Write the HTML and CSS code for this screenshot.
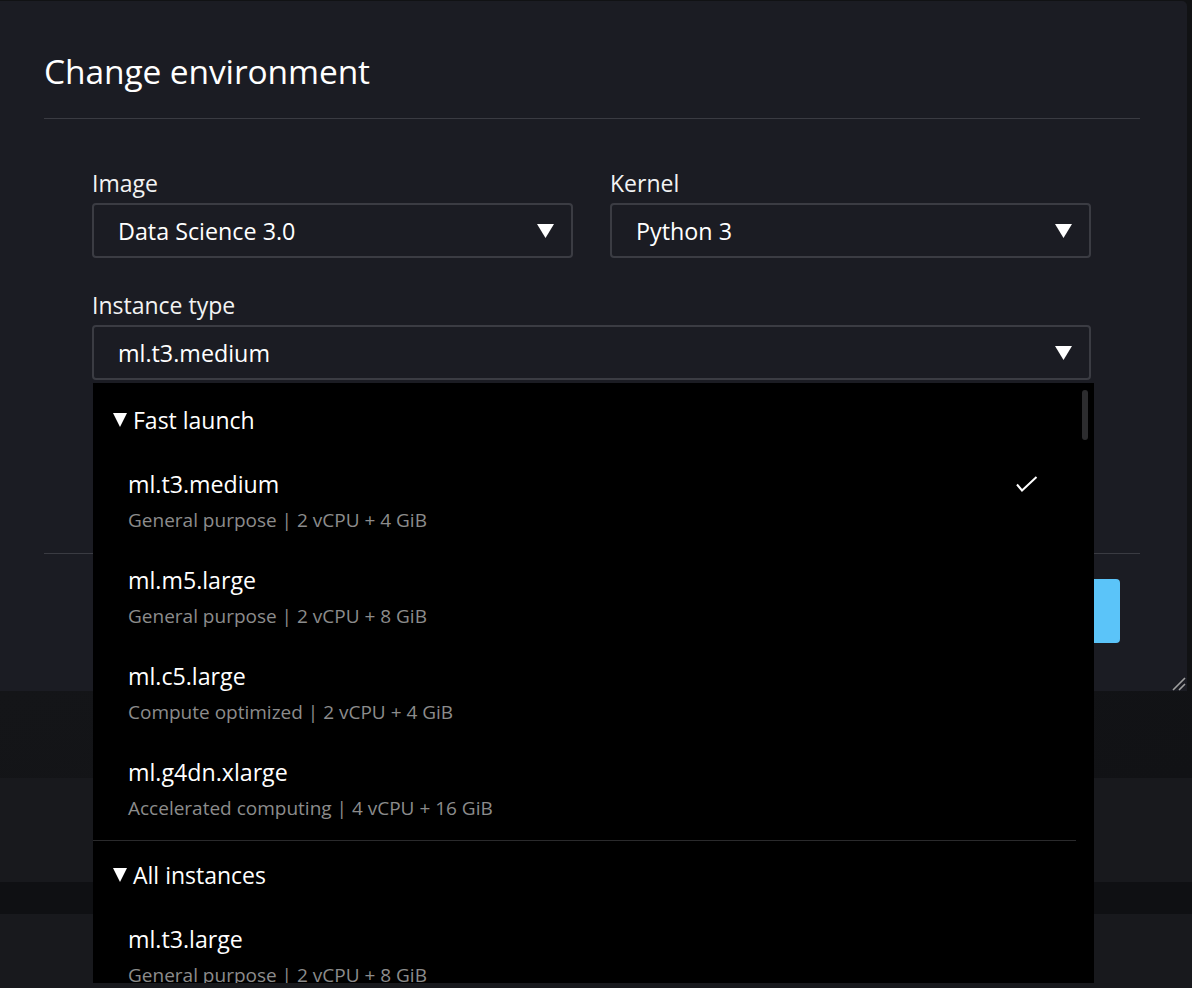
FILE: index.html
```html
<!DOCTYPE html>
<html lang="en">
<head>
<meta charset="utf-8">
<title>Change environment</title>
<link rel="stylesheet" href="styles.css">
</head>
<body>
<div class="screen">
  <div class="top-row">
    <section class="dialog">
      <header class="dialog-header">
        <h2 class="dialog-title">Change environment</h2>
      </header>
      <div class="dialog-body">
        <div class="field-row">
          <div class="field">
            <div class="field-label">Image</div>
            <div class="select">
              <span class="select-value">Data Science 3.0</span>
              <svg class="caret" width="17" height="14" viewBox="0 0 17 14"><path d="M0 0 H17 L8.5 14 Z" fill="#fff"/></svg>
            </div>
          </div>
          <div class="field">
            <div class="field-label">Kernel</div>
            <div class="select">
              <span class="select-value">Python 3</span>
              <svg class="caret" width="17" height="14" viewBox="0 0 17 14"><path d="M0 0 H17 L8.5 14 Z" fill="#fff"/></svg>
            </div>
          </div>
        </div>
        <div class="field field-wide">
          <div class="field-label">Instance type</div>
          <div class="select-wrap">
            <div class="select">
              <span class="select-value">ml.t3.medium</span>
              <svg class="caret" width="17" height="14" viewBox="0 0 17 14"><path d="M0 0 H17 L8.5 14 Z" fill="#fff"/></svg>
            </div>
            <div class="menu">
              <div class="menu-list">
                <div class="group group-first">
                  <div class="group-header">
                    <svg class="group-caret" width="14" height="14" viewBox="0 0 14 14"><path d="M0 0 H14 L7 14 Z" fill="#fff"/></svg>
                    <span>Fast launch</span>
                  </div>
                  <div class="option">
                    <div class="option-text">
                      <div class="option-name">ml.t3.medium</div>
                      <div class="option-desc">General purpose | 2 vCPU + 4 GiB</div>
                    </div>
                    <svg class="check" width="22" height="17" viewBox="0 0 22 17"><path d="M1 8.5 L6 14.5 L20.5 1" fill="none" stroke="#fff" stroke-width="2"/></svg>
                  </div>
                  <div class="option">
                    <div class="option-text">
                      <div class="option-name">ml.m5.large</div>
                      <div class="option-desc">General purpose | 2 vCPU + 8 GiB</div>
                    </div>
                  </div>
                  <div class="option">
                    <div class="option-text">
                      <div class="option-name">ml.c5.large</div>
                      <div class="option-desc">Compute optimized | 2 vCPU + 4 GiB</div>
                    </div>
                  </div>
                  <div class="option">
                    <div class="option-text">
                      <div class="option-name">ml.g4dn.xlarge</div>
                      <div class="option-desc">Accelerated computing | 4 vCPU + 16 GiB</div>
                    </div>
                  </div>
                </div>
                <div class="group">
                  <div class="group-header">
                    <svg class="group-caret" width="14" height="14" viewBox="0 0 14 14"><path d="M0 0 H14 L7 14 Z" fill="#fff"/></svg>
                    <span>All instances</span>
                  </div>
                  <div class="option">
                    <div class="option-text">
                      <div class="option-name">ml.t3.large</div>
                      <div class="option-desc">General purpose | 2 vCPU + 8 GiB</div>
                    </div>
                  </div>
                </div>
              </div>
              <div class="menu-scroll"><div class="menu-thumb"></div></div>
            </div>
          </div>
        </div>
      </div>
      <footer class="dialog-footer">
        <button class="btn btn-link">Cancel</button>
        <button class="btn btn-primary">Select</button>
      </footer>
      <svg class="resize-handle" width="14" height="14" viewBox="0 0 14 14"><path d="M13 1 L1 13 M13 7 L7 13" stroke="#a0a0a0" stroke-width="1.6" fill="none"/></svg>
    </section>
    <div class="side-strip"></div>
  </div>
  <div class="band band-1"></div>
  <div class="band band-2"></div>
  <div class="band band-3"></div>
  <div class="band band-4"></div>
</div>
</body>
</html>
```

FILE: styles.css
```css
* { box-sizing: border-box; }

html, body {
  margin: 0;
  padding: 0;
  background: #18191d;
  font-family: "Open Sans", "Noto Sans", "Liberation Sans", sans-serif;
  color: #fff;
  overflow: hidden;
}

.screen {
  width: 1192px;
  height: 988px;
  overflow: hidden;
  background: #18191d;
}

.top-row {
  display: flex;
  background: #111214;
  padding-top: 1px;
}

.dialog {
  position: relative;
  width: 1187px;
  height: 690px;
  background: #1b1c23;
  border-top-right-radius: 5px;
  padding: 0 47px 0 44px;
  display: flex;
  flex-direction: column;
}

.side-strip {
  flex: 1;
  background: #111214;
}

.dialog-header {
  padding: 48px 0 25px 0;
  border-bottom: 1px solid #3a3b42;
}

.dialog-title {
  margin: 0;
  font-size: 33.5px;
  line-height: 44px;
  font-weight: 500;
  color: #fff;
  letter-spacing: -0.1px;
}

.dialog-body {
  padding: 50px 49px 173px 48px;
}

.field-row {
  display: grid;
  grid-template-columns: 481px 481px;
  column-gap: 37px;
  margin-bottom: 33px;
}

.field-label {
  font-size: 23px;
  line-height: 28px;
  margin-bottom: 6px;
  color: #f2f3f3;
  font-weight: 500;
}

.select-wrap {
  position: relative;
}

.select {
  height: 55px;
  border: 2px solid #3b3c43;
  border-radius: 4px;
  display: flex;
  align-items: center;
  justify-content: space-between;
  padding: 0 17px 0 24px;
  background: #1b1c23;
}

.select-value {
  font-size: 23.3px;
  font-weight: 500;
  color: #fff;
}

.caret {
  display: block;
  margin-top: 1px;
}

.menu {
  position: absolute;
  top: calc(100% + 3px);
  left: 1px;
  width: 1001px;
  height: 600px;
  background: #000;
  display: flex;
  overflow: hidden;
  z-index: 5;
}

.menu-list {
  width: 983px;
  padding-top: 3px;
}

.menu-scroll {
  width: 18px;
  padding: 7px 0 0 6px;
}

.menu-thumb {
  width: 6px;
  height: 50px;
  border-radius: 3px;
  background: #2c2c2e;
}

.group-first {
  padding-bottom: 2px;
  border-bottom: 1px solid #2a2a2c;
}

.group-header {
  height: 68px;
  display: flex;
  align-items: center;
  gap: 6px;
  padding-left: 20px;
  font-size: 23px;
  font-weight: 500;
  color: #fff;
}

.group-caret {
  display: block;
}

.option {
  height: 96px;
  display: flex;
  padding: 16px 38px 0 35px;
}

.option-text {
  flex: 1;
}

.option-name {
  font-size: 23.2px;
  line-height: 28px;
  font-weight: 500;
  color: #fff;
}

.option-desc {
  margin-top: 10px;
  font-size: 19px;
  line-height: 24px;
  color: #8c8c8c;
}

.check {
  display: block;
  margin-top: 6px;
}

.dialog-footer {
  border-top: 1px solid #3a3b42;
  padding: 25px 20px 0 0;
  display: flex;
  justify-content: flex-end;
  gap: 20px;
}

.btn {
  height: 64px;
  border-radius: 4px;
  font-family: inherit;
  font-size: 20px;
  font-weight: 700;
  border: none;
}

.btn-link {
  background: transparent;
  color: #5bc4f9;
  width: 110px;
}

.btn-primary {
  width: 130px;
  background: #5bc4f9;
  color: #0f1b2a;
}

.resize-handle {
  position: absolute;
  right: 1px;
  bottom: 0;
}

.band { width: 100%; }
.band-1 { height: 87px; background: linear-gradient(160deg, #141518, #111215); }
.band-2 { height: 104px; background: #18191d; }
.band-3 { height: 32px; background: #0f1013; }
.band-4 { height: 80px; background: #18191d; }
```
